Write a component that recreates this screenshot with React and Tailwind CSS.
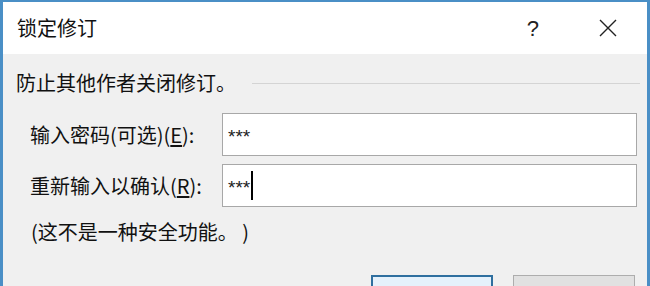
import React from 'react';

const font = { fontFamily: '"Noto Sans CJK SC", "Noto Sans", sans-serif' };

const Field = ({ label, accessKey, cursor }) => (
  <div className="flex items-center h-[43px]">
    <div className="w-[192px] pl-[27px] box-content text-[20px] leading-none text-[#111] whitespace-nowrap">
      {label}(<span className="underline underline-offset-2">{accessKey}</span>):
    </div>
    <div className="w-[415px] h-[43px] border border-[#a8a8a8] bg-white flex items-center pl-[5px]">
      <span className="text-[19px] leading-none text-[#222] pt-[3px]" style={{ fontFamily: '"Liberation Sans", sans-serif' }}>
        ***
      </span>
      {cursor && <span className="ml-[1px] w-[2px] h-[29px] bg-black" />}
    </div>
  </div>
);

export default function App() {
  return (
    <div
      className="w-[650px] h-[286px] overflow-hidden bg-[#f0f0f0] border-t-2 border-l-[3px] border-r-[3px] border-[#4a8fc6]"
      style={font}
    >
      {/* title bar */}
      <div className="h-[52px] bg-white flex items-center pl-[14px]">
        <span className="text-[20px] text-[#111]">锁定修订</span>
        <span className="ml-auto text-[22px] text-[#222] mr-[60px]" style={{ fontFamily: '"Liberation Sans", sans-serif' }}>?</span>
        <svg width="18" height="18" viewBox="0 0 18 18" className="mr-[30px]">
          <path d="M1 1 L17 17 M17 1 L1 17" stroke="#222" strokeWidth="1.4" fill="none" />
        </svg>
      </div>

      {/* body */}
      <div className="pt-[16px]">
        <div className="flex items-center h-[26px] pl-[13px] pr-[7px]">
          <span className="text-[20px] text-[#111] whitespace-nowrap">防止其他作者关闭修订。</span>
          <div className="flex-1 h-px bg-[#d4d4d4] ml-[16px]" />
        </div>

        <div className="mt-[17px] flex flex-col gap-[8px]">
          <Field label="输入密码(可选)" accessKey="E" />
          <Field label="重新输入以确认" accessKey="R" cursor />
        </div>

        <div className="mt-[12px] h-[26px] flex items-center pl-[28px] text-[20px] text-[#111] whitespace-pre">
          (这不是一种安全功能。 )
        </div>

        <div className="mt-[30px] flex justify-end gap-[20px] pr-[12px]">
          <button className="w-[122px] h-[34px] border-2 border-[#2f6f9f] bg-[#e5f1fb]" />
          <button className="w-[122px] h-[34px] border border-[#adadad] bg-[#e1e1e1]" />
        </div>
      </div>
    </div>
  );
}
